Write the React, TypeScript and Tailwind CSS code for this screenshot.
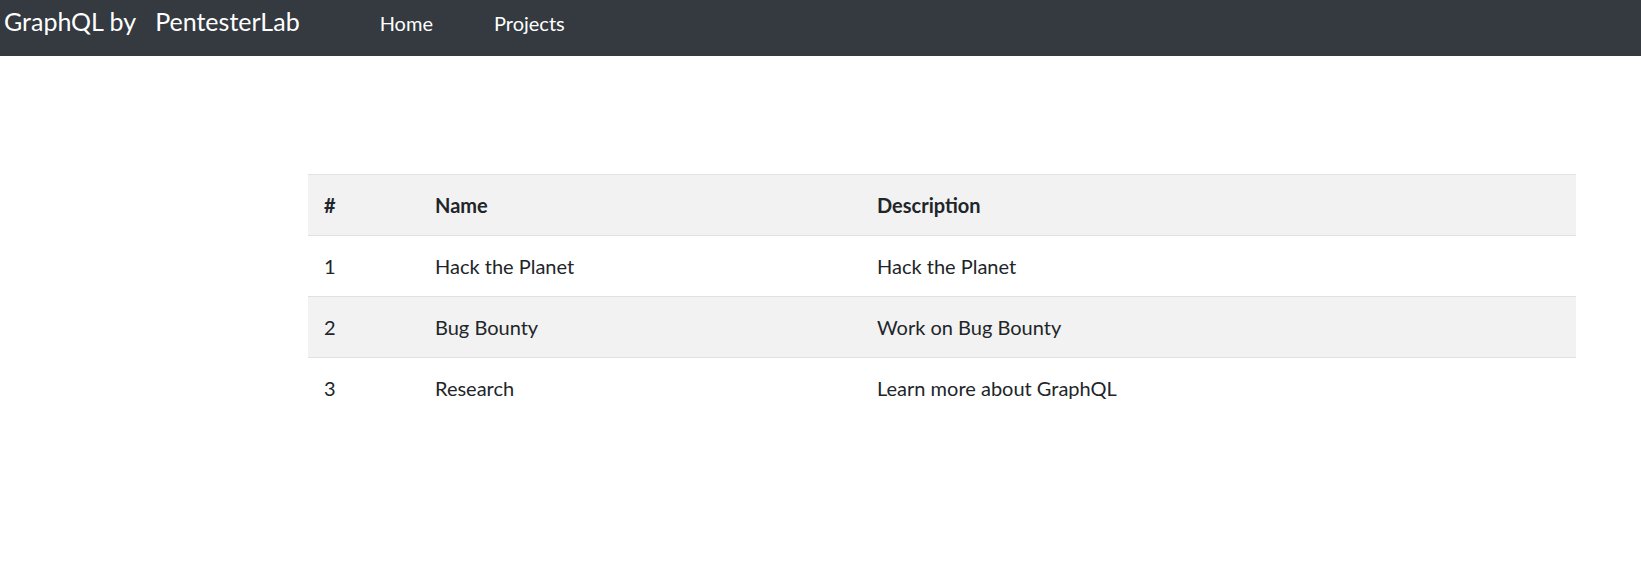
export default function App() {
  const projects = [
    { id: 1, name: "Hack the Planet", description: "Hack the Planet" },
    { id: 2, name: "Bug Bounty", description: "Work on Bug Bounty" },
    { id: 3, name: "Research", description: "Learn more about GraphQL" },
  ];

  return (
    <div className="min-h-[561px] bg-white text-[#212529] font-['Lato','Liberation_Sans',sans-serif]">
      <nav className="h-[56px] bg-[#343a40] flex items-baseline pt-[5px] text-white">
        <a className="ml-[4px] text-[25px] leading-[32px]">GraphQL by</a>
        <a className="ml-[19px] text-[25px] leading-[32px]">PentesterLab</a>
        <ul className="flex ml-[80px] gap-[61px] text-[20px] leading-[30px]">
          <li>Home</li>
          <li>Projects</li>
        </ul>
      </nav>

      <div className="mt-[118px] ml-[308px] mr-[65px]">
        <table className="w-full border-collapse text-[20px] leading-[30px]">
          <colgroup>
            <col className="w-[112px]" />
            <col className="w-[442px]" />
            <col />
          </colgroup>
          <thead>
            <tr className="bg-[#f2f2f2] border-t border-[#dee2e6]">
              <th className="text-left font-bold pl-[16px] pr-[15px] py-[15px]">#</th>
              <th className="text-left font-bold px-[15px] py-[15px]">Name</th>
              <th className="text-left font-bold px-[15px] py-[15px]">Description</th>
            </tr>
          </thead>
          <tbody>
            {projects.map((p, i) => (
              <tr key={p.id} className={`border-t border-[#dee2e6] ${i % 2 === 1 ? "bg-[#f2f2f2]" : ""}`}>
                <td className="pl-[16px] pr-[15px] py-[15px]">{p.id}</td>
                <td className="px-[15px] py-[15px]">{p.name}</td>
                <td className="px-[15px] py-[15px]">{p.description}</td>
              </tr>
            ))}
          </tbody>
        </table>
      </div>
    </div>
  );
}
